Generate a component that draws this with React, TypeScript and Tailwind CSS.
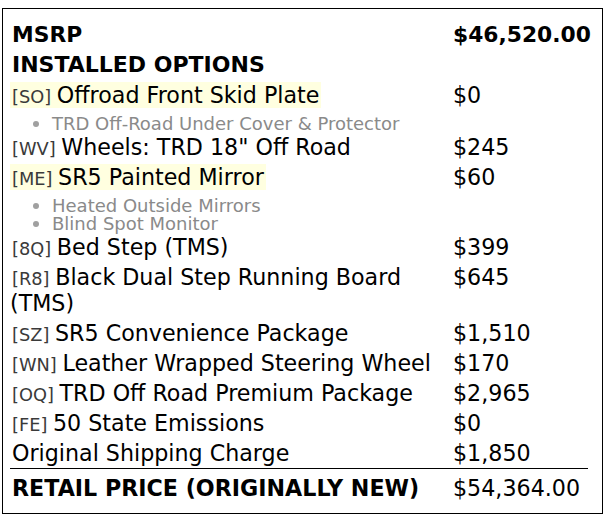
import React from "react";

type Opt = {
  code?: string;
  name: string;
  price: string;
  hl?: boolean;
  items?: string[];
};

const options: Opt[] = [
  { code: "SO", name: "Offroad Front Skid Plate", price: "$0", hl: true, items: ["TRD Off-Road Under Cover & Protector"] },
  { code: "WV", name: 'Wheels: TRD 18" Off Road', price: "$245" },
  { code: "ME", name: "SR5 Painted Mirror", price: "$60", hl: true, items: ["Heated Outside Mirrors", "Blind Spot Monitor"] },
  { code: "8Q", name: "Bed Step (TMS)", price: "$399" },
  { code: "R8", name: "Black Dual Step Running Board (TMS)", price: "$645" },
  { code: "SZ", name: "SR5 Convenience Package", price: "$1,510" },
  { code: "WN", name: "Leather Wrapped Steering Wheel", price: "$170" },
  { code: "OQ", name: "TRD Off Road Premium Package", price: "$2,965" },
  { code: "FE", name: "50 State Emissions", price: "$0" },
  { name: "Original Shipping Charge", price: "$1,850" },
];

export default function App() {
  return (
    <div className="pt-2 pl-[2px] bg-white">
      <div
        className="w-[601px] h-[506px] border border-black pt-[11px] pl-[7px] text-black text-[22.2px] leading-[26px]"
        style={{ fontFamily: '"DejaVu Sans", sans-serif' }}
      >
        <div className="flex py-[2px] font-bold text-[21.8px]">
          <div className="w-[441px] px-[2px]">MSRP</div>
          <div className="w-[137px] pl-[2px] whitespace-nowrap">$46,520.00</div>
        </div>
        <div className="flex py-[2px] font-bold text-[22px]">
          <div className="w-[441px] px-[2px]">INSTALLED OPTIONS</div>
        </div>
        {options.map((o) => (
          <div key={o.name} className={`flex ${o.items ? "pt-[2px]" : "py-[2px]"}`}>
            <div className="w-[441px]">
              <span className={`px-[2px] ${o.hl ? "bg-[#ffffe0]" : ""}`}>
                {o.code && (
                  <span className="text-[17.8px] leading-none text-[#3a3a3a]">[{o.code}] </span>
                )}
                {o.name}
              </span>
              {o.items && (
                <div className="mt-[7px] mb-[-1px] text-[18px] leading-[18px] text-[#8a8a8a]">
                  {o.items.map((it) => (
                    <div key={it} className="flex items-center">
                      <span className="ml-[23px] mr-[13px] w-[6px] h-[6px] rounded-full bg-[#a0a0a0]" />
                      <span>{it}</span>
                    </div>
                  ))}
                </div>
              )}
            </div>
            <div className="w-[137px] pl-[2px] whitespace-nowrap">{o.price}</div>
          </div>
        ))}
        <div className="flex w-[578px] border-t border-black pt-[6px]">
          <div className="w-[441px] px-[2px] font-bold text-[22.2px]">RETAIL PRICE (ORIGINALLY NEW)</div>
          <div className="w-[137px] pl-[2px] whitespace-nowrap">$54,364.00</div>
        </div>
      </div>
    </div>
  );
}
